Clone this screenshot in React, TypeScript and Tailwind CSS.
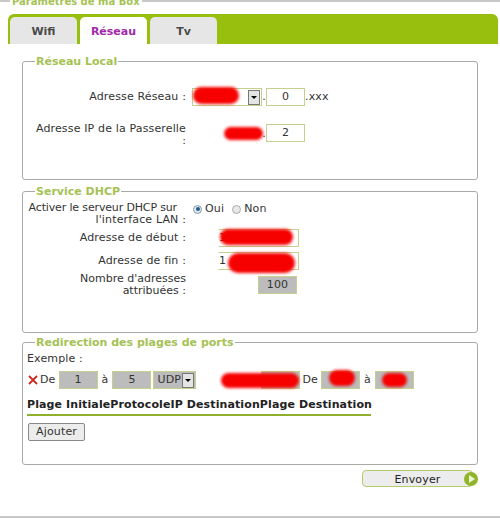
const font = "font-['DejaVu_Sans',Verdana,sans-serif]";

function Panel({ legend, className, children }: { legend: string; className: string; children: React.ReactNode }) {
  return (
    <fieldset className={`relative mx-[22px] rounded-[3px] border border-[#a9a9a9] ${className}`}>
      <legend className="ml-3 px-px text-[11px] leading-[10px] font-bold tracking-normal text-[#a5c255]">
        <span className="relative top-px">{legend}</span>
      </legend>
      {children}
    </fieldset>
  );
}

function Field({ value, className = "" }: { value?: string; className?: string }) {
  return (
    <div className={`flex h-[18px] w-[39px] shrink-0 items-center justify-center border border-[#c5d08e] text-[#333] ${className}`}>
      {value}
    </div>
  );
}

function Blob({ className }: { className: string }) {
  return <div className={`absolute rounded-full bg-[#f60000] blur-[1.5px] ${className}`} />;
}

function Arrow() {
  return (
    <div className="flex h-[15px] w-[12px] items-center justify-center border border-[#777] bg-[#e4e4e4]">
      <div className="h-0 w-0 border-x-[3px] border-t-[3px] border-x-transparent border-t-black" />
    </div>
  );
}

function Tab({ label, active }: { label: string; active?: boolean }) {
  return (
    <div className={`flex h-[27px] w-[67px] items-center justify-center rounded-t-[5px] pt-0.5 text-[11px] font-bold tracking-normal ${active ? "bg-white text-[#a12aa8]" : "bg-[#e6e6e6] text-[#4a4a4a]"}`}>
      {label}
    </div>
  );
}

export default function App() {
  return (
    <div className={`${font} relative h-[518px] w-[500px] overflow-hidden bg-white text-[11px] leading-3 tracking-[0.15px] text-[#333]`}>
      {/* outer fieldset */}
      <div className="absolute inset-x-0 top-0 h-[2px] bg-[#c8c8c8]" />
      <div className="absolute left-[10px] -top-1 bg-white px-0.5 text-[10px] leading-[12px] font-bold tracking-normal text-[#a5c255]">Paramètres de ma Box</div>
      <div className="absolute inset-x-0 bottom-0 h-[2px] bg-[#c8c8c8]" />

      <div className="pt-[14px]">
        <div className="ml-2 mr-0.5 flex h-[30px] items-end gap-[3px] rounded-t-[6px] bg-[#98bf0e] pl-0.5">
          <Tab label="Wifi" />
          <Tab label="Réseau" active />
          <Tab label="Tv" />
        </div>

        {/* Réseau Local */}
        <Panel legend="Réseau Local" className="mt-3 h-[124px]">
          <div className="mt-[22px] flex h-[18px] items-center">
            <div className="w-[164px] pr-px text-right">Adresse Réseau :</div>
            <div className="ml-[5px] flex h-[18px] w-[70px] items-center justify-end border border-[#c5d08e] pr-px"><Arrow /></div>
            <span className="w-[4px] text-center">.</span>
            <Field value="0" />
            <span>.xxx</span>
          </div>
          <div className="mt-[18px] flex items-start">
            <div className="-mt-px w-[164px] pr-px text-right">
              <span className="whitespace-nowrap">Adresse IP de la Passerelle</span>
              <br />:
            </div>
            <div className="ml-[5px] w-[70px]" />
            <span className="w-[4px] pt-1 text-center">.</span>
            <Field value="2" />
          </div>
          <Blob className="left-[170px] top-[21px] h-[17px] w-[46px]" />
          <Blob className="left-[201px] top-[61px] h-[13px] w-[39px]" />
        </Panel>

        {/* Service DHCP */}
        <Panel legend="Service DHCP" className="mt-[6px] h-[147px]">
          <div className="mt-[6px] flex items-start">
            <div className="w-[164px] pr-px text-right">
              <span className="mr-[9px] tracking-[-0.15px] whitespace-nowrap">Activer le serveur DHCP sur</span>
              <br />
              l'interface LAN :
            </div>
            <div className="ml-[6px] flex items-center pt-px">
              <div className="flex h-[9px] w-[9px] items-center justify-center rounded-full border border-[#8a9aa8] bg-[#dfe8ee]">
                <div className="h-[4px] w-[4px] rounded-full bg-[#1f5f8f]" />
              </div>
              <span className="ml-[3px]">Oui</span>
              <div className="ml-2 h-[9px] w-[9px] rounded-full border border-[#aaa] bg-[#e8e8e8]" />
              <span className="ml-[3px]">Non</span>
            </div>
          </div>
          <div className="mt-[3px] flex h-[18px] items-center">
            <div className="w-[164px] pr-px text-right">Adresse de début :</div>
            <div className="ml-[31px] flex h-[18px] w-[81px] items-center border border-[#c5d08e] border-l-transparent">1</div>
          </div>
          <div className="mt-[5px] flex h-[18px] items-center">
            <div className="w-[164px] pr-px text-right">Adresse de fin :</div>
            <div className="ml-[31px] flex h-[18px] w-[81px] items-center border border-[#c5d08e] border-l-transparent">1</div>
          </div>
          <div className="mt-[3px] flex items-start">
            <div className="w-[164px] pr-px text-right tracking-normal">Nombre d'adresses attribuées :</div>
            <Field value="100" className="ml-[71px] mt-[3px] bg-[#bcbcbc]" />
          </div>
          <Blob className="left-[197px] top-[33px] h-[16px] w-[73px]" />
          <Blob className="left-[205px] top-[57px] h-[20px] w-[67px]" />
        </Panel>

        {/* Redirection des plages de ports */}
        <Panel legend="Redirection des plages de ports" className="mt-1 h-[128px]">
          <div className="ml-[4px] mt-[6px]">Exemple :</div>
          <div className="mt-[6px] flex h-[18px] items-center">
            <svg viewBox="0 0 10 10" className="ml-[5px] h-[10px] w-[10px] shrink-0 text-[#cc2a1e]">
              <path d="M1 1 L9 9 M9 1 L1 9" stroke="currentColor" strokeWidth="1.8" fill="none" />
            </svg>
            <span className="ml-[2px]">De</span>
            <Field value="1" className="ml-[3px] bg-[#bcbcbc]" />
            <span className="mx-1">à</span>
            <Field value="5" className="bg-[#bcbcbc]" />
            <div className="ml-[2px] flex h-[18px] w-[43px] items-center justify-between border border-[#c5d08e] bg-[#bcbcbc] pl-[3px] pr-px">
              UDP
              <Arrow />
            </div>
            <Field className="ml-[65px] bg-[#bcbcbc]" />
            <span className="ml-[2px]">De</span>
            <Field className="ml-[3px] bg-[#bcbcbc]" />
            <span className="mx-1">à</span>
            <Field className="bg-[#bcbcbc]" />
          </div>
          <div className="ml-[4px] mt-[10px] w-[344px] border-b-2 border-[#8fb02a] pb-[3px] font-bold tracking-[0.11px] whitespace-nowrap text-[#222]">
            Plage InitialeProtocoleIP DestinationPlage Destination
          </div>
          <button className="ml-[5px] mt-[7px] flex h-[18px] w-[57px] items-center justify-center rounded-[2px] border border-[#888] bg-[#ececec] text-[#333]">
            Ajouter
          </button>
          <Blob className="left-[198px] top-[26px] h-[15px] w-[78px]" />
          <Blob className="left-[306px] top-[23px] h-[16px] w-[26px]" />
          <Blob className="left-[359px] top-[26px] h-[14px] w-[25px]" />
        </Panel>

        {/* Envoyer */}
        <div className="mr-[27px] mt-[5px] flex justify-end">
          <div className="relative flex h-[17px] w-[111px] items-center justify-center rounded-[4px] border border-[#b5cc6a] bg-[#ececec] pt-0.5 text-[#222]">
            Envoyer
            <div className="absolute -right-[6px] top-px flex h-[14px] w-[14px] items-center justify-center rounded-full bg-[#8fb52a]">
              <div className="ml-px h-0 w-0 border-y-[4px] border-l-[6px] border-y-transparent border-l-[#eef5d8]" />
            </div>
          </div>
        </div>
      </div>
    </div>
  );
}
